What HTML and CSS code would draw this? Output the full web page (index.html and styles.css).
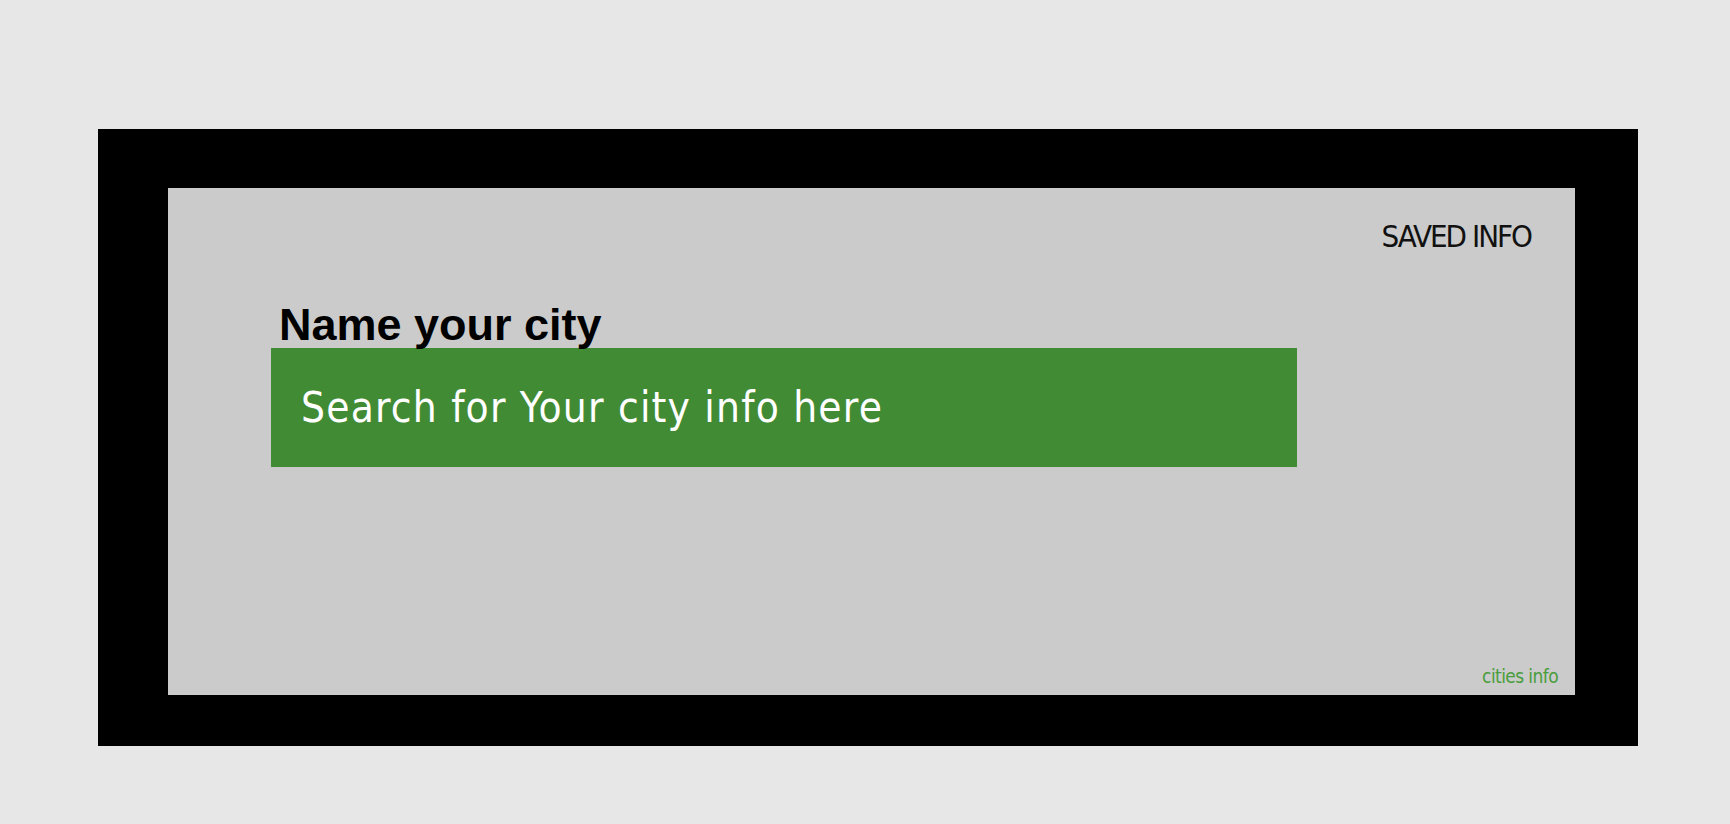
FILE: index.html
```html
<!DOCTYPE html>
<html lang="en">
<head>
<meta charset="utf-8">
<title>Cities info</title>
<link rel="stylesheet" href="styles.css">
</head>
<body>
  <div class="frame">
    <div class="panel">
      <header class="top">
        <span class="saved">SAVED INFO</span>
      </header>
      <main class="search">
        <h1 class="title">Name your city</h1>
        <div class="bar">
          <span class="bar-text">Search for Your city info here</span>
        </div>
      </main>
      <footer class="foot">
        <span class="brand">cities info</span>
      </footer>
    </div>
  </div>
</body>
</html>
```
FILE: styles.css
```css
html, body {
  margin: 0;
  padding: 0;
}
body {
  background: #e7e7e7;
  width: 1730px;
  height: 824px;
  overflow: hidden;
}
.frame {
  margin: 129px 0 0 98px;
  width: 1540px;
  height: 617px;
  box-sizing: border-box;
  background: #000;
  padding: 59px 63px 51px 70px;
}
.panel {
  width: 1407px;
  height: 507px;
  background: #cbcbcb;
  display: flex;
  flex-direction: column;
  box-sizing: border-box;
}
.top {
  display: flex;
  justify-content: flex-end;
  padding: 32px 44px 0 0;
  height: 32px;
}
.saved {
  font-family: "DejaVu Sans Condensed", "DejaVu Sans", sans-serif;
  font-stretch: condensed;
  font-size: 31px;
  line-height: 32px;
  letter-spacing: -2px;
  color: #111;
}
.search {
  margin: 50px 0 0 103px;
  width: 1026px;
}
.title {
  margin: 0 0 0 8px;
  font-family: "Liberation Sans", Arial, sans-serif;
  font-weight: bold;
  font-size: 45px;
  line-height: 45px;
  height: 46px;
  color: #000;
}
.bar {
  background: #428b35;
  height: 119px;
  display: flex;
  align-items: center;
  padding-left: 30px;
}
.bar-text {
  font-family: "DejaVu Sans Condensed", "DejaVu Sans", sans-serif;
  font-stretch: condensed;
  font-size: 42px;
  letter-spacing: 1.2px;
  color: #fff;
}
.foot {
  margin-top: auto;
  display: flex;
  justify-content: flex-end;
  padding: 0 17px 9px 0;
}
.brand {
  font-family: "DejaVu Sans Condensed", "DejaVu Sans", sans-serif;
  font-stretch: condensed;
  font-size: 19px;
  line-height: 20px;
  letter-spacing: -0.6px;
  color: #4a9d3d;
}
```
